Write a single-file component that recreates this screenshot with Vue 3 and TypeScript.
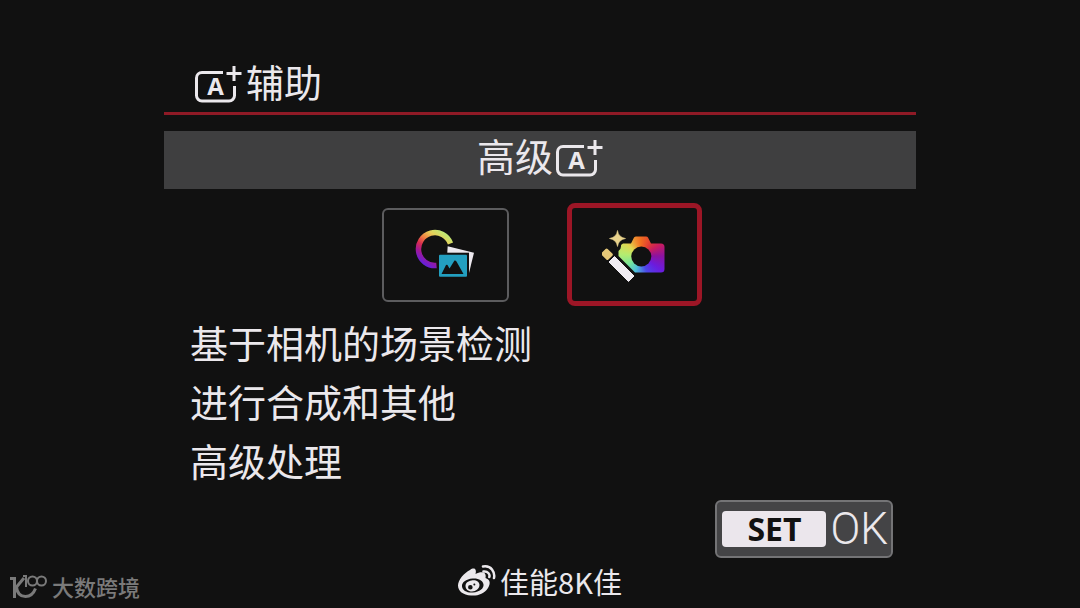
<script setup lang="ts">
import { ref } from 'vue'

type ModeId = 'creative' | 'advanced'

const modes: { id: ModeId; label: string }[] = [
  { id: 'creative', label: '创意辅助' },
  { id: 'advanced', label: '高级A+' },
]
const selected = ref<ModeId>('advanced')
const description: string[] = ['基于相机的场景检测', '进行合成和其他', '高级处理']
</script>

<template>
  <div class="screen">
    <main class="panel">
      <h1 class="title">
        <svg class="auto" viewBox="0 0 48 38" aria-hidden="true">
          <path d="M29 7.500H8a5.500 5.500 0 0 0-5.500 5.500v17.500a5.500 5.500 0 0 0 5.500 5.500h27a5.500 5.500 0 0 0 5.500-5.500V21" />
          <path d="M40 1v15M32.500 8.500h15" class="plus" />
          <text x="21.500" y="30">A</text>
        </svg>
        <span>辅助</span>
      </h1>

      <h2 class="mode-name">
        <span>高级</span>
        <svg class="auto" viewBox="0 0 48 38" aria-hidden="true">
          <path d="M29 7.500H8a5.500 5.500 0 0 0-5.500 5.500v17.500a5.500 5.500 0 0 0 5.500 5.500h27a5.500 5.500 0 0 0 5.500-5.500V21" />
          <path d="M40 1v15M32.500 8.500h15" class="plus" />
          <text x="21.500" y="30">A</text>
        </svg>
      </h2>

      <div class="modes">
        <button
          v-for="mode in modes"
          :key="mode.id"
          type="button"
          class="mode"
          :class="{ active: selected === mode.id }"
          :aria-label="mode.label"
          :aria-pressed="selected === mode.id"
          @click="selected = mode.id"
        >
          <svg v-if="mode.id === 'creative'" class="icon" viewBox="1 1 66 54" aria-hidden="true">
            <defs>
              <linearGradient id="ring" gradientUnits="userSpaceOnUse" x1="36" y1="7" x2="14" y2="39">
                <stop offset="0" stop-color="#b8ec78" />
                <stop offset="0.220" stop-color="#e6d058" />
                <stop offset="0.420" stop-color="#f08040" />
                <stop offset="0.600" stop-color="#d82c50" />
                <stop offset="0.780" stop-color="#a01898" />
                <stop offset="1" stop-color="#6420dc" />
              </linearGradient>
            </defs>
            <path d="M38.500 16.500A16.500 16.500 0 1 0 24.500 38.500" fill="none" stroke="url(#ring)" stroke-width="5.500" />
            <path d="M35.700 19.300L62 25.700L57 46H34z" fill="#ece8ee" />
            <rect x="25" y="25.700" width="32" height="26" fill="#111" />
            <rect x="27" y="27.700" width="28" height="22" rx="1" fill="#239fc0" />
            <path d="M29.500 47l4.500-9q1-.5 1.500 0l2 3.500 5-8q1-.5 2 1l7 12.500z" fill="#111" />
          </svg>
          <svg v-else class="icon" viewBox="2 -2 66 54" aria-hidden="true">
            <foreignObject x="0" y="0" width="66" height="54">
              <div class="camera-body"></div>
            </foreignObject>
            <circle cx="41.300" cy="26.500" r="10" fill="#111" />
            <path d="M17.500 0.500Q18.300 7.200 25.500 8.500Q18.300 9.800 17.500 16.500Q16.700 9.800 9.500 8.500Q16.700 7.200 17.500 .5z" fill="#e8d28c" stroke="#e8d28c" stroke-width=".6" />
            <rect x="2.200" y="20" width="9.600" height="8.500" rx="1.500" fill="#e6c878" transform="rotate(45 7 24.250)" />
            <path d="M9 32l5.500-5.500L34 46l-5.500 5.500z" fill="#f0ecf2" stroke="#f0ecf2" stroke-linejoin="round" />
          </svg>
        </button>
      </div>

      <p class="description">
        <span v-for="line in description" :key="line">{{ line }}</span>
      </p>

      <div class="actions">
        <button type="button" class="confirm"><span class="key">SET</span><span class="ok">OK</span></button>
      </div>
    </main>

    <footer class="footer">
      <div class="brand">
        <svg viewBox="0 0 38 26" aria-hidden="true">
          <path d="M0 5.500h4.500V25" stroke-width="3" />
          <path d="M14 5l-7.500 9q1 9.500 9 9.500 7 0 10-8" stroke-width="3" />
          <path d="M13 3h3v11" stroke-width="2" />
          <circle cx="22.500" cy="8" r="4.500" stroke-width="2" />
          <circle cx="31.500" cy="8" r="4.500" stroke-width="2" />
        </svg>
        <span>大数跨境</span>
      </div>
      <div class="author">
        <svg viewBox="0 0 38 32" aria-hidden="true">
          <path
            fill-rule="evenodd"
            d="M12 5C16 2 19 4 17.500 9C23 6 29 6.500 27.500 13C32 14.500 33 18 30 23C26 29 20 31 13 30.500C5 30 0 26 0 20.500C0 15 6 8 12 5zM14.500 13.500C8 14 3.500 17.500 4 21.500C4.500 25.500 9 28 15 27.500C21.500 27 26 23.500 25.500 19.500C25 15.500 20.500 13 14.500 13.500z"
          />
          <path fill-rule="evenodd" d="M13.500 15.500c4-1 8 1 8 4.500s-3.500 6.500-7.500 6.500-6.500-2.500-6.500-5.500 2.500-5 6-5.500zM12.300 20a2.300 2.300 0 1 0 .1 4.600 2.300 2.300 0 0 0-.1-4.600zM16.300 18.500a1 1 0 1 0 .1 2 1 1 0 0 0-.1-2z" />
          <path d="M25 1.500q6-1 9 3t2 8.500M25.500 6.500q3-.5 4.800 1.500t1 4" fill="none" stroke="#ebe8ec" stroke-width="2.500" stroke-linecap="round" />
        </svg>
        <span>佳能8K佳</span>
      </div>
    </footer>
  </div>
</template>

<style>
body {
  margin: 0;
  background: #111;
}
</style>

<style scoped>
.screen {
  box-sizing: border-box;
  display: flex;
  flex-direction: column;
  min-height: 100vh;
  padding-top: 56px;
  background: #111;
  color: #ebe8ec;
  font-family: 'Noto Sans CJK SC', sans-serif;
}

.panel {
  margin: 0 164px;
}

.title,
.mode-name {
  display: flex;
  align-items: center;
  margin: 0;
  font-size: 38px;
  font-weight: 400;
  line-height: 50px;
}

.title span,
.mode-name span {
  padding-bottom: 6px;
}

.title {
  gap: 4px;
  padding-left: 30px;
  border-bottom: 3px solid #8f1a26;
}

.mode-name {
  box-sizing: border-box;
  justify-content: center;
  gap: 2px;
  height: 58px;
  margin-top: 16px;
  padding-bottom: 4px;
  background: #3f3f40;
}

.auto {
  width: 48px;
  height: 38px;
  fill: none;
  stroke: currentColor;
  stroke-width: 3;
}

.auto text {
  fill: currentColor;
  stroke: none;
  font: 700 24px 'Open Sans', sans-serif;
  text-anchor: middle;
}

.modes {
  display: flex;
  align-items: center;
  justify-content: center;
  gap: 58px;
  height: 103px;
  margin-top: 14px;
  padding-left: 4px;
}

.mode {
  box-sizing: border-box;
  display: flex;
  align-items: center;
  justify-content: center;
  width: 127px;
  height: 94px;
  padding: 0;
  border: 2px solid #5c5c5e;
  border-radius: 6px;
  background: #111;
}

.mode.active {
  width: 135px;
  height: 103px;
  border: 5px solid #9c1626;
  border-radius: 8px;
}

.icon {
  width: 66px;
  height: 54px;
}

.camera-body {
  width: 66px;
  height: 54px;
  background: conic-gradient(
    from 0deg at 41px 26px,
    #f06c20,
    #e03c34 35deg,
    #c81c60 60deg,
    #8c12a0 90deg,
    #6a1ce0 125deg,
    #4c48e8 160deg,
    #50c0d8 200deg,
    #74e49c 235deg,
    #b4ec70 275deg,
    #e0d850 310deg,
    #f09030 340deg,
    #f06c20
  );
  clip-path: path('M21 15L23 13.500H31L34 7.500Q35 6.500 36 6.500H46Q47.500 6.500 48 7.500L51 13.500H61Q64.500 13.500 64.500 17V39Q64.500 42.500 61 42.500H35L18.500 26V21Q21.500 19 21 15z');
}

.description {
  display: flex;
  flex-direction: column;
  margin: 6px 0 0;
  padding-left: 26px;
  font-size: 38px;
  line-height: 59px;
}

.actions {
  display: flex;
  justify-content: flex-end;
  margin-top: 11px;
  padding-right: 23px;
}

.confirm {
  box-sizing: border-box;
  display: flex;
  align-items: center;
  gap: 4px;
  height: 58px;
  padding: 0 3px 0 5px;
  border: 2px solid #747476;
  border-radius: 6px;
  background: #444446;
  color: #ebe8ec;
}

.key {
  width: 104px;
  border-radius: 4px;
  background: #ebe6ec;
  color: #111;
  font: 700 32px/36px 'Open Sans', sans-serif;
}

.ok {
  font: 300 44px/52px Roboto, sans-serif;
}

.footer {
  display: grid;
  grid-template-columns: 1fr auto 1fr;
  align-items: center;
  margin-top: auto;
  padding: 0 10px 6px;
  line-height: 42px;
}

.brand,
.author {
  display: flex;
  align-items: center;
}

.brand {
  gap: 4px;
  padding-top: 10px;
  color: #7a7a7a;
  font-size: 22px;
  font-weight: 500;
  line-height: 32px;
}

.brand svg {
  width: 38px;
  height: 26px;
  fill: none;
  stroke: currentColor;
}

.author {
  gap: 4px;
  font-size: 29px;
}

.author svg {
  width: 38px;
  height: 32px;
  fill: currentColor;
}
</style>
